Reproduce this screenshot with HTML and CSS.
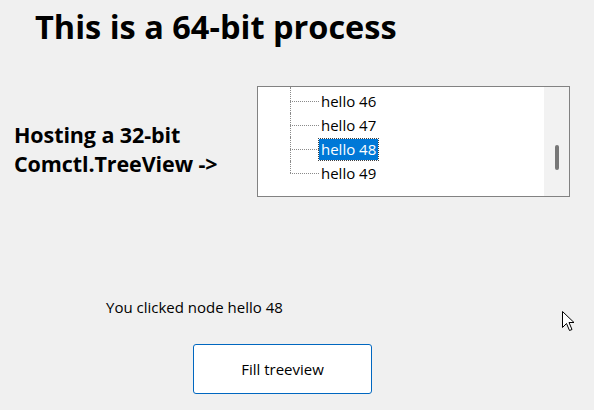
FILE: index.html
```html
<!DOCTYPE html>
<html>
<head>
<meta charset="utf-8">
<link rel="stylesheet" href="styles.css">
</head>
<body>
<div class="window">
  <h1 class="title">This is a 64-bit process</h1>
  <div class="host-row">
    <div class="host-label">Hosting a 32-bit<br>Comctl.TreeView -&gt;</div>
    <div class="tree">
      <div class="tree-items">
        <div class="tree-item first"><span class="hline"></span><span class="label">hello 46</span></div>
        <div class="tree-item"><span class="hline"></span><span class="label">hello 47</span></div>
        <div class="tree-item"><span class="hline"></span><span class="label selected">hello 48</span></div>
        <div class="tree-item last"><span class="hline"></span><span class="label">hello 49</span></div>
      </div>
      <div class="scrollbar"><div class="thumb"></div></div>
    </div>
  </div>
  <div class="status">You clicked node hello 48</div>
  <button class="fill-btn">Fill treeview</button>
  <svg class="cursor" width="13" height="21" viewBox="0 0 13 21">
    <path d="M0.5 0.5 L0.5 16.5 L4.5 12.5 L7.5 19.5 L10 18.5 L7 11.5 L12 11.5 Z" fill="#fff" stroke="#000" stroke-width="1" stroke-linejoin="miter"/>
  </svg>
</div>
</body>
</html>
```
FILE: styles.css
```css
html, body {
  margin: 0;
  padding: 0;
  background: #f0f0f0;
}
.window {
  position: relative;
  width: 594px;
  height: 410px;
  overflow: hidden;
  font-family: "Open Sans", "Noto Sans", sans-serif;
  color: #000;
  display: flex;
  flex-direction: column;
}
.title {
  margin: 8px 0 0 35px;
  font-size: 32.5px;
  font-weight: 700;
  line-height: 38px;
}
.host-row {
  display: flex;
  align-items: flex-start;
  margin-top: 40px;
}
.host-label {
  margin: 34px 0 0 14px;
  width: 243px;
  font-size: 21.5px;
  font-weight: 700;
  line-height: 29px;
  letter-spacing: -0.1px;
}
.tree {
  width: 311px;
  height: 109px;
  border: 1px solid #828282;
  background: #fff;
  display: flex;
  overflow: hidden;
}
.tree-items {
  flex: 1;
  padding-left: 32px;
}
.tree-item {
  position: relative;
  display: flex;
  align-items: center;
  height: 24px;
}
.tree-item::before {
  content: "";
  position: absolute;
  left: 0;
  top: 0;
  height: 100%;
  border-left: 1px dotted #8a8a8a;
}
.tree-item.first {
  height: 26px;
  padding-top: 2px;
  box-sizing: border-box;
}
.tree-item.last::before {
  height: 50%;
}
.hline {
  width: 29px;
  border-top: 1px dotted #8a8a8a;
  flex: none;
  margin-top: 1px;
}
.label {
  font-size: 15px;
  line-height: 21px;
  padding: 0 2px;
  white-space: nowrap;
}
.selected {
  background: #0078d7;
  color: #fff;
  outline: 1px dotted #404040;
}
.scrollbar {
  width: 25px;
  background: #f2f2f2;
  display: flex;
  flex-direction: column;
  align-items: center;
  padding-top: 58px;
  box-sizing: border-box;
}
.thumb {
  width: 4px;
  height: 25px;
  background: #777;
  border-radius: 2px;
  margin-left: 1px;
}
.status {
  margin: 100px 0 0 106px;
  font-size: 15px;
  line-height: 20px;
}
.fill-btn {
  margin: 27px 0 0 193px;
  width: 179px;
  height: 50px;
  background: #fff;
  border: 1px solid #0067c0;
  border-radius: 3px;
  font-family: "Open Sans", "Noto Sans", sans-serif;
  font-size: 15px;
  color: #000;
  padding: 0;
}
.cursor {
  position: absolute;
  left: 562px;
  top: 311px;
}
```
